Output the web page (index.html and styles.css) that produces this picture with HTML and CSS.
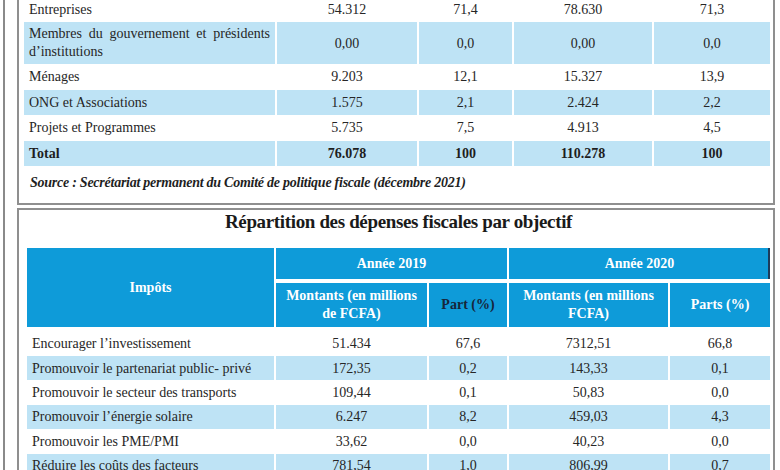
FILE: index.html
```html
<!DOCTYPE html>
<html lang="fr">
<head>
<meta charset="utf-8">
<title>Dépenses fiscales</title>
<link rel="stylesheet" href="styles.css">
</head>
<body>
<div class="frame">
  <section class="panel panel-top">
    <table class="t1">
      <colgroup>
        <col class="a1"><col class="a2"><col class="a3"><col class="a4"><col class="a5">
      </colgroup>
      <tbody>
        <tr class="row first">
          <td class="lbl">Entreprises</td><td>54.312</td><td>71,4</td><td>78.630</td><td>71,3</td>
        </tr>
        <tr class="row alt tall">
          <td class="lbl just">Membres du gouvernement et présidents d’institutions</td><td>0,00</td><td>0,0</td><td>0,00</td><td>0,0</td>
        </tr>
        <tr class="row">
          <td class="lbl">Ménages</td><td>9.203</td><td>12,1</td><td>15.327</td><td>13,9</td>
        </tr>
        <tr class="row alt">
          <td class="lbl">ONG et Associations</td><td>1.575</td><td>2,1</td><td>2.424</td><td>2,2</td>
        </tr>
        <tr class="row">
          <td class="lbl">Projets et Programmes</td><td>5.735</td><td>7,5</td><td>4.913</td><td>4,5</td>
        </tr>
        <tr class="row alt total">
          <td class="lbl">Total</td><td>76.078</td><td>100</td><td>110.278</td><td>100</td>
        </tr>
      </tbody>
    </table>
    <p class="source">Source : Secrétariat permanent du Comité de politique fiscale (décembre 2021)</p>
  </section>

  <section class="panel panel-bottom">
    <h2 class="title">Répartition des dépenses fiscales par objectif</h2>
    <table class="t2">
      <colgroup>
        <col class="b1"><col class="b2"><col class="b3"><col class="b4"><col class="b5">
      </colgroup>
      <thead>
        <tr class="hrow1">
          <th rowspan="2" class="imp">Impôts</th>
          <th colspan="2" class="year">Année 2019</th>
          <th colspan="2" class="year year-last">Année 2020</th>
        </tr>
        <tr class="hrow2">
          <th>Montants (en millions<br>de FCFA)</th>
          <th class="dark">Part (%)</th>
          <th>Montants (en millions<br>FCFA)</th>
          <th>Parts (%)</th>
        </tr>
      </thead>
      <tbody>
        <tr class="row first2">
          <td class="lbl">Encourager l’investissement</td><td>51.434</td><td>67,6</td><td>7312,51</td><td>66,8</td>
        </tr>
        <tr class="row alt">
          <td class="lbl">Promouvoir le partenariat public- privé</td><td>172,35</td><td>0,2</td><td>143,33</td><td>0,1</td>
        </tr>
        <tr class="row">
          <td class="lbl">Promouvoir le secteur des transports</td><td>109,44</td><td>0,1</td><td>50,83</td><td>0,0</td>
        </tr>
        <tr class="row alt">
          <td class="lbl">Promouvoir l’énergie solaire</td><td>6.247</td><td>8,2</td><td>459,03</td><td>4,3</td>
        </tr>
        <tr class="row">
          <td class="lbl">Promouvoir les PME/PMI</td><td>33,62</td><td>0,0</td><td>40,23</td><td>0,0</td>
        </tr>
        <tr class="row alt">
          <td class="lbl">Réduire les coûts des facteurs</td><td>781,54</td><td>1,0</td><td>806,99</td><td>0,7</td>
        </tr>
      </tbody>
    </table>
  </section>
</div>
</body>
</html>
```

FILE: styles.css
```css
html, body {
  margin: 0;
  padding: 0;
  background: #ffffff;
}

body {
  font-family: "Liberation Serif", "DejaVu Serif", serif;
  color: #262626;
  font-size: 14px;
  overflow: hidden;
  height: 470px;
}

table, td, th, p, h2 {
  font-family: "Liberation Serif", "DejaVu Serif", serif;
}

.frame {
  margin-left: 3px;
  border-left: 2px solid #8a8a8a;
  padding-left: 12px;
  min-height: 470px;
  box-sizing: border-box;
}

.panel {
  width: 758px;
  box-sizing: border-box;
  border: 2px solid #8f8f8f;
  background: #ffffff;
}

.panel-top {
  border-top: none;
  margin-top: -3px;
  padding: 0 1px 10px 3px;
}

.panel-bottom {
  margin-top: 3px;
  padding: 0 1px 0 6px;
  border-bottom: none;
}

table {
  border-collapse: separate;
  border-spacing: 2px 0;
  table-layout: fixed;
}

.t1 { width: 750px; }
.t2 { width: 747px; }

.a1 { width: 251px; }
.a2 { width: 140px; }
.a3 { width: 93px; }
.a4 { width: 138px; }
.a5 { width: 116px; }

.b1 { width: 247px; }
.b2 { width: 151px; }
.b3 { width: 78px; }
.b4 { width: 159px; }
.b5 { width: 100px; }

td {
  padding: 0;
  text-align: center;
  vertical-align: middle;
  line-height: 17px;
  font-size: 14px;
}

td.lbl {
  text-align: left;
  padding-left: 5px;
  padding-right: 5px;
}

td.just {
  text-align: justify;
  text-align-last: left;
  line-height: 18px;
}

.row { height: 25.5px; }
.row.first { height: 25px; }
.row.tall { height: 42px; }

.alt td { background: #bee3f5; }

.total td { font-weight: bold; color: #1e1e1e; }

.source {
  margin: 7px 0 0 0;
  padding-left: 8px;
  line-height: 20px;
  font-size: 14px;
  letter-spacing: -0.25px;
  font-weight: bold;
  font-style: italic;
  color: #1f1f1f;
}

.title {
  margin: 0 0 14px 0;
  text-align: center;
  font-size: 19px;
  letter-spacing: -0.35px;
  line-height: 24px;
  font-weight: bold;
  color: #1a1a1a;
}

th {
  background: #0e9bd9;
  color: #ffffff;
  font-weight: bold;
  font-size: 14px;
  line-height: 18px;
  padding: 0;
  text-align: center;
  vertical-align: middle;
}

.hrow1 { height: 35px; }
.hrow1 .year {
  border-bottom: 4px solid #ffffff;
}
.hrow1 .year-last {
  box-shadow: inset -2px 0 0 #1d3b5a;
}
.hrow2 { height: 44px; }

th.dark { color: #17263a; }

.t2 .row { height: 24.4px; }
.t2 .row.first2 { height: 29px; }
.t2 .row.first2 td { padding-top: 4px; }
```
